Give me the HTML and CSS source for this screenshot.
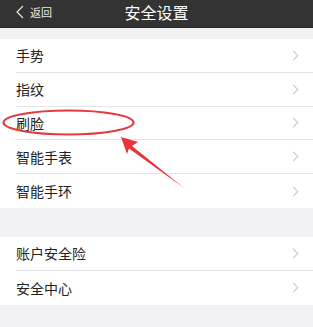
FILE: index.html
```html
<!DOCTYPE html>
<html lang="zh">
<head>
<meta charset="utf-8">
<link rel="stylesheet" href="styles.css">
</head>
<body>
<div class="page">
  <header class="nav">
    <div class="back">
      <svg class="back-icon" width="8" height="14" viewBox="0 0 8 14"><path d="M7 1 L1 7 L7 13" fill="none" stroke="#e8e8e8" stroke-width="1.2"/></svg>
      <span>返回</span>
    </div>
    <div class="title">安全设置</div>
  </header>
  <div class="gap gap-top"></div>
  <ul class="group">
    <li class="row"><span>手势</span><i class="chev"></i></li>
    <li class="row"><span>指纹</span><i class="chev"></i></li>
    <li class="row"><span>刷脸</span><i class="chev"></i></li>
    <li class="row"><span>智能手表</span><i class="chev"></i></li>
    <li class="row"><span>智能手环</span><i class="chev"></i></li>
  </ul>
  <div class="gap gap-mid"></div>
  <ul class="group">
    <li class="row"><span>账户安全险</span><i class="chev"></i></li>
    <li class="row"><span>安全中心</span><i class="chev"></i></li>
  </ul>
  <svg class="mark" width="313" height="327" viewBox="0 0 313 327">
    <ellipse cx="68.5" cy="122.5" rx="65" ry="12" fill="none" stroke="#e23a3f" stroke-width="2.2"/>
    <polygon points="121,137 138,142 132,146 184,188 129,148.5 127,154" fill="#e8343a"/>
  </svg>
</div>
</body>
</html>
```
FILE: styles.css
```css
* { box-sizing: border-box; margin: 0; padding: 0; }
html, body { width: 313px; height: 327px; overflow: hidden; }
body {
  font-family: "Noto Sans CJK SC", "Noto Sans", sans-serif;
  background: #f2f2f5;
}
.page { position: relative; width: 313px; height: 327px; background: #f2f2f5; }
.nav {
  height: 28px;
  background: #333333;
  border-bottom: 1px solid #262626;
  position: relative;
  display: flex;
  align-items: center;
  justify-content: center;
}
.back {
  position: absolute;
  left: 16px;
  top: 4px;
  display: flex;
  align-items: center;
  gap: 6px;
  color: #e8e8e8;
  font-size: 11px;
  line-height: 16px;
}
.title {
  color: #ffffff;
  font-size: 16px;
  line-height: 20px;
  margin-top: -4px;
  letter-spacing: 0;
}
.gap-top { height: 11px; }
.gap-mid { height: 29px; }
.group { list-style: none; background: #ffffff; }
.row {
  height: 33.8px;
  margin-left: 16px;
  padding-right: 14px;
  display: flex;
  align-items: center;
  justify-content: space-between;
  border-bottom: 1px solid #e4e4e6;
  font-size: 14px;
  color: #222222;
}
.row:last-child { border-bottom: none; }
.chev {
  width: 7px;
  height: 7px;
  border-top: 1.3px solid #c4c4c8;
  border-right: 1.3px solid #c4c4c8;
  transform: rotate(45deg);
  margin-right: 2px;
}
.mark { position: absolute; left: 0; top: 0; pointer-events: none; }
```
